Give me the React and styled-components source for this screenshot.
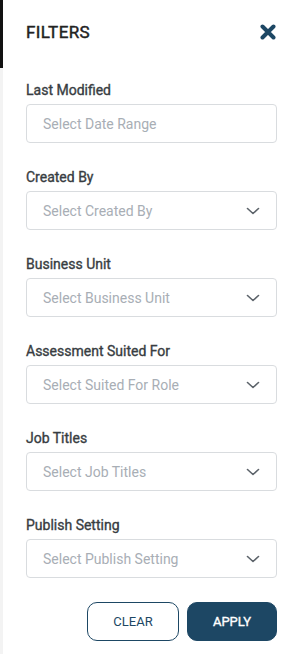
import styled, { createGlobalStyle } from "styled-components";

const GlobalStyle = createGlobalStyle`
  html, body {
    margin: 0;
    padding: 0;
    background: #ffffff;
  }
  body {
    font-family: Roboto, "Liberation Sans", sans-serif;
  }
`;

const Page = styled.div`
  display: flex;
  width: 300px;
  height: 654px;
  overflow: hidden;
`;

const Backdrop = styled.div`
  width: 3px;
  flex-shrink: 0;
  display: flex;
  flex-direction: column;
  background: #f3f3f3;
`;

const BackdropTop = styled.div`
  height: 68px;
  background: #111111;
`;

const Panel = styled.aside`
  flex: 1;
  padding: 20px 23px 0 23px;
  display: flex;
  flex-direction: column;
`;

const Header = styled.div`
  display: flex;
  justify-content: space-between;
  align-items: center;
  height: 24px;
  margin-bottom: 38px;
`;

const Title = styled.h2`
  margin: 0;
  font-size: 17px;
  font-weight: 400;
  color: #222222;
  letter-spacing: 0.4px;
  -webkit-text-stroke: 0.45px #222222;
`;

const CloseButton = styled.button`
  border: 0;
  background: none;
  padding: 0;
  margin-right: 1px;
  display: flex;
  cursor: pointer;
`;

const Field = styled.div`
  display: flex;
  flex-direction: column;
  margin-bottom: 26px;
`;

const Label = styled.label`
  font-size: 14px;
  font-weight: 400;
  color: #383d42;
  -webkit-text-stroke: 0.35px #383d42;
  line-height: 17px;
  margin-bottom: 5px;
`;

const Box = styled.div`
  height: 39px;
  box-sizing: border-box;
  border: 1px solid #d9dcdf;
  border-radius: 4px;
  display: flex;
  align-items: center;
  justify-content: space-between;
  padding: 0 16px 0 16px;
  font-size: 14px;
  color: #a8aeb5;
`;

const Actions = styled.div`
  display: flex;
  justify-content: flex-end;
  gap: 8px;
  margin-top: -2px;
`;

const Button = styled.button`
  height: 39px;
  width: ${(p) => p.$width}px;
  box-sizing: border-box;
  border-radius: 10px;
  border: 1px solid #1d4764;
  background: ${(p) => (p.$primary ? "#1d4764" : "#ffffff")};
  color: ${(p) => (p.$primary ? "#ffffff" : "#1d4764")};
  font-family: Roboto, "Liberation Sans", sans-serif;
  font-size: 13px;
  font-weight: 400;
  -webkit-text-stroke: ${(p) => (p.$primary ? "0.35px #ffffff" : "0")};
  cursor: pointer;
`;

const Chevron = () => (
  <svg width="14" height="8" viewBox="0 0 14 8" fill="none">
    <path d="M1.5 1.5 L7 6.5 L12.5 1.5" stroke="#5c636a" strokeWidth="1.6" strokeLinecap="round" strokeLinejoin="round" />
  </svg>
);

const CloseIcon = () => (
  <svg width="16" height="16" viewBox="0 0 16 16">
    <path d="M2.5 2.5 L13.5 13.5 M13.5 2.5 L2.5 13.5" stroke="#1d4764" strokeWidth="4" strokeLinecap="round" />
  </svg>
);

const fields = [
  { label: "Last Modified", placeholder: "Select Date Range", select: false },
  { label: "Created By", placeholder: "Select Created By", select: true },
  { label: "Business Unit", placeholder: "Select Business Unit", select: true },
  { label: "Assessment Suited For", placeholder: "Select Suited For Role", select: true },
  { label: "Job Titles", placeholder: "Select Job Titles", select: true },
  { label: "Publish Setting", placeholder: "Select Publish Setting", select: true },
];

const App = () => {
  return (
    <Page>
      <GlobalStyle />
      <Backdrop>
        <BackdropTop />
      </Backdrop>
      <Panel>
        <Header>
          <Title>FILTERS</Title>
          <CloseButton aria-label="Close">
            <CloseIcon />
          </CloseButton>
        </Header>
        {fields.map((f) => (
          <Field key={f.label}>
            <Label>{f.label}</Label>
            <Box>
              <span>{f.placeholder}</span>
              {f.select && <Chevron />}
            </Box>
          </Field>
        ))}
        <Actions>
          <Button $width={92}>CLEAR</Button>
          <Button $primary $width={90}>APPLY</Button>
        </Actions>
      </Panel>
    </Page>
  );
};

export default App;
